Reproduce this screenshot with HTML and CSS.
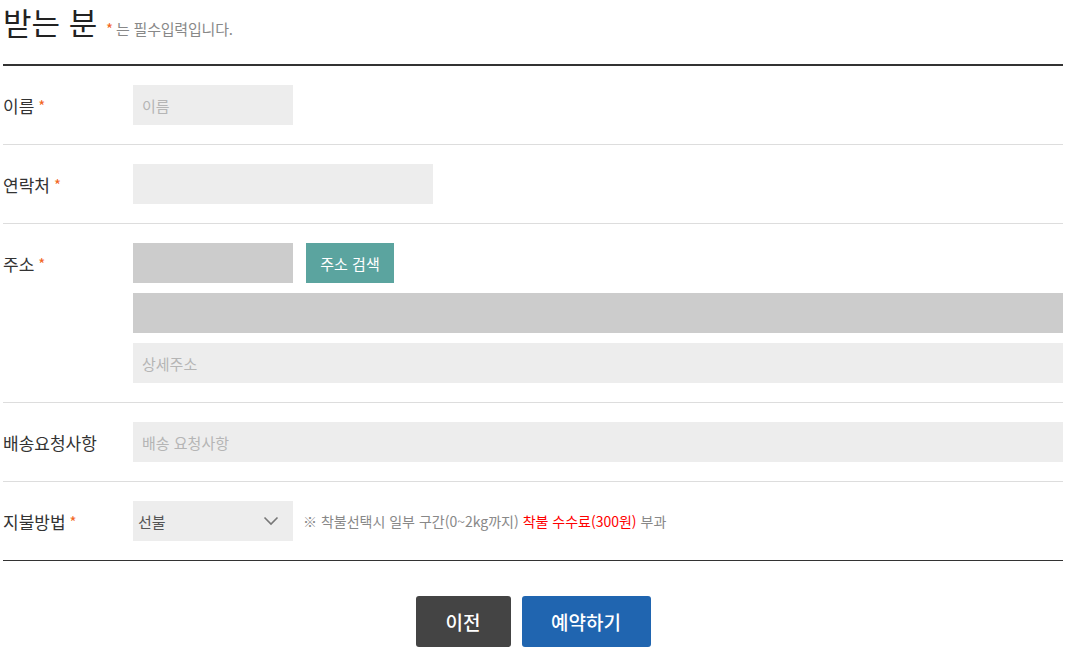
FILE: index.html
```html
<!DOCTYPE html>
<html lang="ko">
<head>
<meta charset="utf-8">
<link rel="stylesheet" href="styles.css">
</head>
<body>
<div class="wrap">
  <h2 class="title">받는 분 <span class="req">*</span><span class="note">는 필수입력입니다.</span></h2>
  <div class="form">
    <div class="row">
      <div class="label">이름 <span class="req">*</span></div>
      <div class="field"><input class="inp w160" placeholder="이름"></div>
    </div>
    <div class="row">
      <div class="label">연락처 <span class="req">*</span></div>
      <div class="field"><input class="inp w300"></div>
    </div>
    <div class="row">
      <div class="label">주소 <span class="req">*</span></div>
      <div class="field col">
        <div class="line">
          <input class="inp w160 dark">
          <button class="search">주소 검색</button>
        </div>
        <input class="inp full dark">
        <input class="inp full" placeholder="상세주소">
      </div>
    </div>
    <div class="row">
      <div class="label">배송요청사항</div>
      <div class="field"><input class="inp full" placeholder="배송 요청사항"></div>
    </div>
    <div class="row last">
      <div class="label">지불방법 <span class="req">*</span></div>
      <div class="field line">
        <div class="select">
          <span>선불</span>
          <svg width="16" height="10" viewBox="0 0 16 10"><path d="M1.5 1.5 L8 8 L14.5 1.5" fill="none" stroke="#777" stroke-width="1.6"/></svg>
        </div>
        <p class="desc">※ 착불선택시 일부 구간(0~2kg까지) <span class="red">착불 수수료(300원)</span> 부과</p>
      </div>
    </div>
  </div>
  <div class="btns">
    <button class="btn prev">이전</button>
    <button class="btn submit">예약하기</button>
  </div>
</div>
</body>
</html>
```

FILE: styles.css
```css
* { box-sizing: border-box; }
body {
  margin: 0;
  font-family: "Noto Sans CJK KR", "Noto Sans", sans-serif;
  color: #333;
  background: #fff;
}
.wrap {
  width: 1060px;
  margin-left: 3px;
}
.title {
  margin: 0;
  height: 66px;
  font-size: 31px;
  font-weight: 400;
  line-height: 44px;
  color: #222;
  border-bottom: 2px solid #333;
}
.title .req {
  font-size: 15px;
  color: #f26522;
}
.title .note {
  font-size: 15px;
  color: #888;
  margin-left: 3px;
  letter-spacing: -0.2px;
}
.form {
  border-bottom: 1px solid #333;
}
.row {
  display: flex;
  align-items: flex-start;
  padding: 19px 0;
  border-bottom: 1px solid #ddd;
}
.row.last { border-bottom: 0; }
.label {
  width: 130px;
  height: 40px;
  flex: none;
  display: flex;
  align-items: center;
  gap: 4px;
  font-size: 17px;
  color: #333;
}
.label .req {
  color: #f26522;
  font-size: 15px;
}
.field {
  flex: 1;
  display: flex;
}
.field.col {
  flex-direction: column;
  gap: 10px;
}
.line {
  display: flex;
  align-items: center;
  gap: 13px;
}
.inp {
  height: 40px;
  border: 0;
  background: #ededed;
  padding: 0 9px;
  font-family: inherit;
  font-size: 15px;
  color: #333;
  outline: none;
  display: block;
}
.inp::placeholder { color: #b5b5b5; }
.inp.dark { background: #ccc; }
.w160 { width: 160px; }
.w300 { width: 300px; }
.full { width: 100%; }
.search {
  height: 40px;
  width: 88px;
  border: 0;
  background: #5ba49f;
  color: #fff;
  font-family: inherit;
  font-size: 15px;
  padding: 0;
}
.select {
  width: 160px;
  height: 40px;
  background: #ededed;
  display: flex;
  align-items: center;
  justify-content: space-between;
  padding: 0 14px 0 5px;
  font-size: 15px;
  color: #555;
}
.desc {
  margin: 0 0 0 -3px;
  font-size: 14px;
  color: #888;
}
.desc .red { color: #f00; }
.btns {
  display: flex;
  justify-content: center;
  gap: 11px;
  padding-top: 35px;
}
.btn {
  height: 51px;
  border: 0;
  border-radius: 3px;
  color: #fff;
  font-family: inherit;
  font-size: 19px;
  font-weight: 500;
  padding: 0;
}
.prev { width: 95px; background: #444; }
.submit { width: 129px; background: #2065b0; }
```
